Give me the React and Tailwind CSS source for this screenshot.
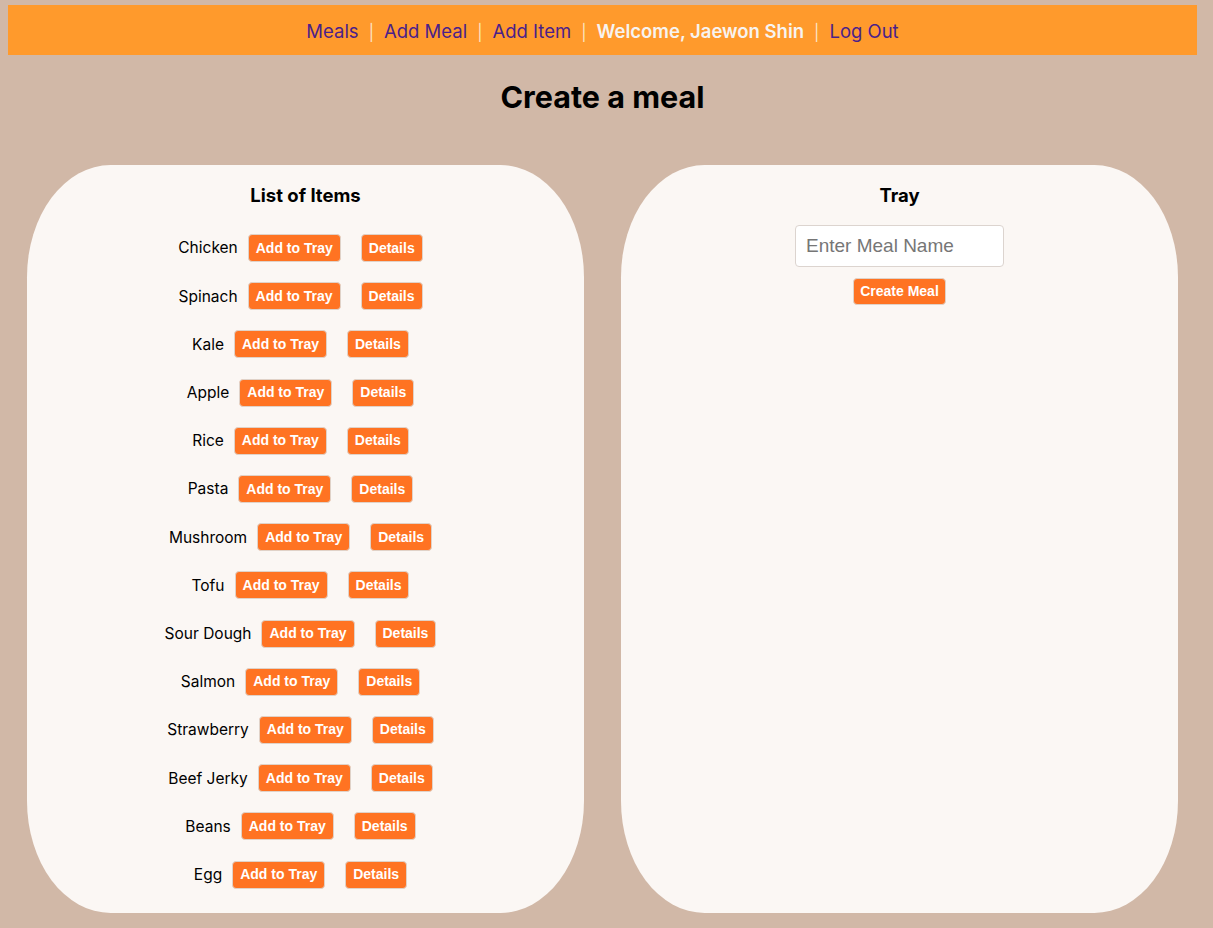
const items = [
  'Chicken', 'Spinach', 'Kale', 'Apple', 'Rice', 'Pasta', 'Mushroom',
  'Tofu', 'Sour Dough', 'Salmon', 'Strawberry', 'Beef Jerky', 'Beans', 'Egg',
];

const btn =
  "mx-[10px] h-[28px] px-[7px] rounded-[4px] border border-[#e0d2c8] bg-[#ff7322] text-white text-[14px] font-bold font-['Liberation_Sans',Arial,sans-serif]";

function Sep() {
  return <span className="mx-[10px] text-[16px] text-[#fbe3c4]">|</span>;
}

export default function App() {
  return (
    <div className="min-h-[928px] bg-[#d1b8a7] pt-[5px] px-[8px] font-['Inter',sans-serif] text-black">
      <div className="w-[1189px]">
        {/* Nav */}
        <nav className="h-[50px] pt-[3px] bg-[#ff9a2c] flex items-center justify-center text-[18.5px]">
          <a className="text-[#4b1f8a]">Meals</a>
          <Sep />
          <a className="text-[#4b1f8a]">Add Meal</a>
          <Sep />
          <a className="text-[#4b1f8a]">Add Item</a>
          <Sep />
          <span className="font-semibold text-[#f7f3f0]">Welcome, Jaewon Shin</span>
          <Sep />
          <a className="text-[#4b1f8a]">Log Out</a>
        </nav>

        <h1 className="text-center text-[30.5px] font-bold mt-[20px] leading-[44px]">Create a meal</h1>

        <div className="flex gap-[37px] px-[19px] mt-[46px]">
          {/* Items */}
          <div className="w-[557px] h-[748px] rounded-[15%] bg-[#fbf7f4] pt-[18px]">
            <h2 className="text-center text-[18.5px] font-bold leading-[24px]">List of Items</h2>
            <ul className="mt-[17px]">
              {items.map((name) => (
                <li key={name} className="flex items-center justify-center h-[48.2px] text-[15.5px]">
                  <span>{name}</span>
                  <button className={btn}>Add to Tray</button>
                  <button className={btn}>Details</button>
                </li>
              ))}
            </ul>
          </div>

          {/* Tray */}
          <div className="w-[557px] h-[748px] rounded-[15%] bg-[#fbf7f4] pt-[18px] flex flex-col items-center">
            <h2 className="text-center text-[18.5px] font-bold leading-[24px]">Tray</h2>
            <input
              placeholder="Enter Meal Name"
              className="mt-[18px] w-[209px] h-[42px] px-[10px] rounded-[4px] border border-[#dcd4cf] bg-white text-[19px] font-['Liberation_Sans',Arial,sans-serif] placeholder:text-[#767676] outline-none"
            />
            <button className="mt-[11px] h-[27px] px-[6px] rounded-[4px] border border-[#e0d2c8] bg-[#ff7322] text-white text-[14px] font-bold font-['Liberation_Sans',Arial,sans-serif]">
              Create Meal
            </button>
          </div>
        </div>
      </div>
    </div>
  );
}
